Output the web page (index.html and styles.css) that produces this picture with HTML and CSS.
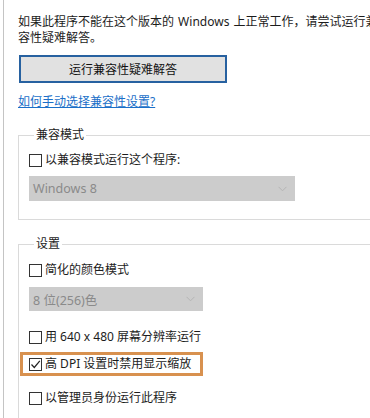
FILE: index.html
```html
<!DOCTYPE html>
<html lang="zh-CN">
<head>
<meta charset="utf-8">
<link rel="stylesheet" href="styles.css">
</head>
<body>
<div class="page">
  <p class="intro"><span class="line">如果此程序不能在这个版本的 Windows 上正常工作，请尝试运行兼</span><span class="line">容性疑难解答。</span></p>
  <div class="btn">运行兼容性疑难解答</div>
  <a class="link" href="#">如何手动选择兼容性设置?</a>

  <fieldset class="group g1">
    <legend>兼容模式</legend>
    <div class="row"><span class="cb"></span><span>以兼容模式运行这个程序:</span></div>
    <div class="select wide"><span>Windows 8</span><svg class="chev" width="9" height="6" viewBox="0 0 9 6"><path d="M0.5 0.8 L4.5 4.8 L8.5 0.8" fill="none" stroke="#b4b4b4" stroke-width="1"/></svg></div>
  </fieldset>

  <fieldset class="group g2">
    <legend>设置</legend>
    <div class="row"><span class="cb"></span><span>简化的颜色模式</span></div>
    <div class="select narrow"><span>8 位(256)色</span><svg class="chev" width="9" height="6" viewBox="0 0 9 6"><path d="M0.5 0.8 L4.5 4.8 L8.5 0.8" fill="none" stroke="#b4b4b4" stroke-width="1"/></svg></div>
    <div class="row r640"><span class="cb"></span><span>用 640 x 480 屏幕分辨率运行</span></div>
    <div class="row hl"><span class="cb checked"><svg width="11" height="11" viewBox="0 0 11 11"><path d="M1.5 5.5 L4.3 8.5 L9.8 1.8" fill="none" stroke="#222" stroke-width="1.2"/></svg></span><span>高 DPI 设置时禁用显示缩放</span></div>
    <div class="row radmin"><span class="cb"></span><span>以管理员身份运行此程序</span></div>
  </fieldset>
</div>
</body>
</html>
```

FILE: styles.css
```css
html, body {
  margin: 0;
  padding: 0;
  background: #ffffff;
  overflow: hidden;
}
body {
  width: 370px;
  height: 418px;
  font-family: "Noto Sans", "Noto Sans CJK SC", sans-serif;
  font-size: 12px;
  color: #1c1c1c;
}
.page {
  margin-left: 3px;
  border-left: 1px solid #c4c4c4;
  padding-left: 14px;
  padding-top: 14px;
  height: 418px;
  box-sizing: border-box;
  overflow: hidden;
}
.intro {
  margin: 0;
  line-height: 16px;
}
.intro .line {
  display: block;
  white-space: nowrap;
  word-spacing: 1px;
}
.btn {
  margin-top: 9px;
  margin-left: 1px;
  width: 208px;
  height: 28px;
  box-sizing: border-box;
  border: 2px solid #2761a0;
  background: #e1e1e1;
  display: flex;
  align-items: center;
  justify-content: center;
  color: #111;
}
.link {
  display: inline-block;
  margin-top: 11px;
  line-height: 16px;
  color: #1a6fc8;
  text-decoration: underline;
}
.group {
  margin: 0 -40px 0 0;
  border: 1px solid #dadada;
  padding: 0 0 0 10px;
  min-width: 0;
}
.group legend {
  padding: 0 2px;
  margin-left: 5px;
  line-height: 14px;
  color: #1c1c1c;
}
.g1 {
  margin-top: 18px;
  padding-top: 10px;
  padding-bottom: 18px;
}
.g2 {
  margin-top: 17px;
  padding-top: 11px;
  height: 200px;
}
.row {
  display: flex;
  align-items: center;
  height: 16px;
  line-height: 16px;
  gap: 3px;
}
.cb {
  width: 13px;
  height: 13px;
  box-sizing: border-box;
  border: 1px solid #333;
  background: #fff;
  display: flex;
  align-items: center;
  justify-content: center;
  flex: none;
}
.select {
  margin-top: 8px;
  height: 25px;
  background: #cccccc;
  color: #8a8a8a;
  display: flex;
  align-items: center;
  justify-content: space-between;
  padding: 0 8px 0 4px;
  box-sizing: border-box;
  font-size: 12.5px;
}
.select.wide { width: 266px; }
.select.narrow { width: 174px; margin-top: 9px; height: 24px; }
.chev { flex: none; }
.r640 { margin-top: 18px; }
.hl {
  margin-top: 7px;
  margin-left: -9px;
  width: 183px;
  height: 24px;
  box-sizing: border-box;
  border: 3px solid #d8914f;
  padding-left: 6px;
}
.radmin { margin-top: 14px; }
```
